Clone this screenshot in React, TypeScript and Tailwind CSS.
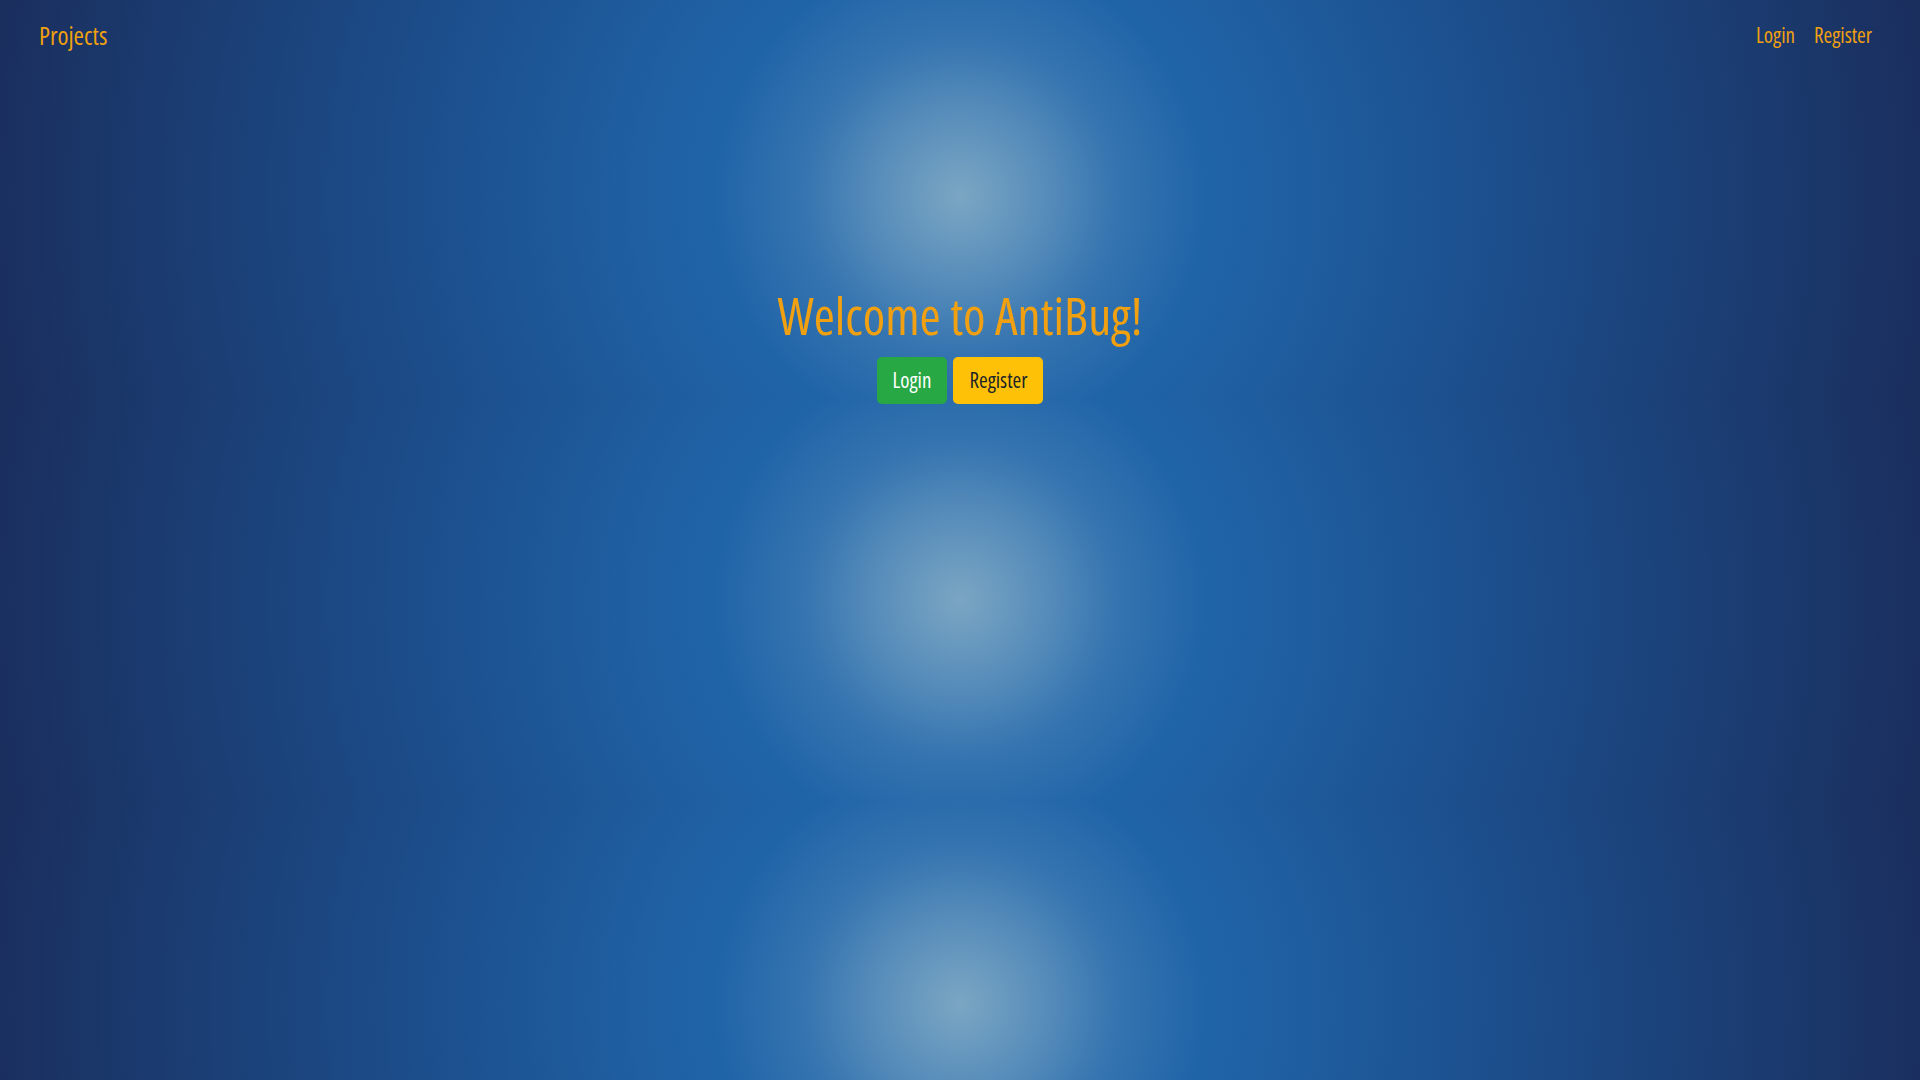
export default function App() {
  return (
    <div className="min-h-screen bg-[#1a2d5c] bg-[radial-gradient(circle,#7ba6c3_0%,#5a8fbb_8%,#3574b0_16%,#2064a8_25%,#1f60a3_32%,#1c4f8d_54%,#1a2e5d_100%)] bg-[length:100%_404px] bg-[position:0_-6px] bg-repeat font-['Open_Sans',sans-serif] font-stretch-[75%]">
      <nav className="flex items-center justify-between px-[39px] h-[72px]">
        <a href="#" className="text-[25px] text-[#f0a010]">
          Projects
        </a>
        <div className="flex items-center gap-[19px] pr-[9px] text-[21px] text-[#f0a010]">
          <a href="#">Login</a>
          <a href="#">Register</a>
        </div>
      </nav>

      <main className="flex flex-col items-center pt-[213px]">
        <h1 className="text-[51px] leading-[1.2] text-[#f0a010]">
          Welcome to AntiBug!
        </h1>
        <div className="mt-[11px] flex gap-[6px]">
          <button className="h-[47px] rounded-[5px] bg-[#28a745] px-4 text-[21px] text-white">
            Login
          </button>
          <button className="h-[47px] rounded-[5px] bg-[#ffc107] px-4 text-[21px] text-[#212529]">
            Register
          </button>
        </div>
      </main>
    </div>
  );
}
